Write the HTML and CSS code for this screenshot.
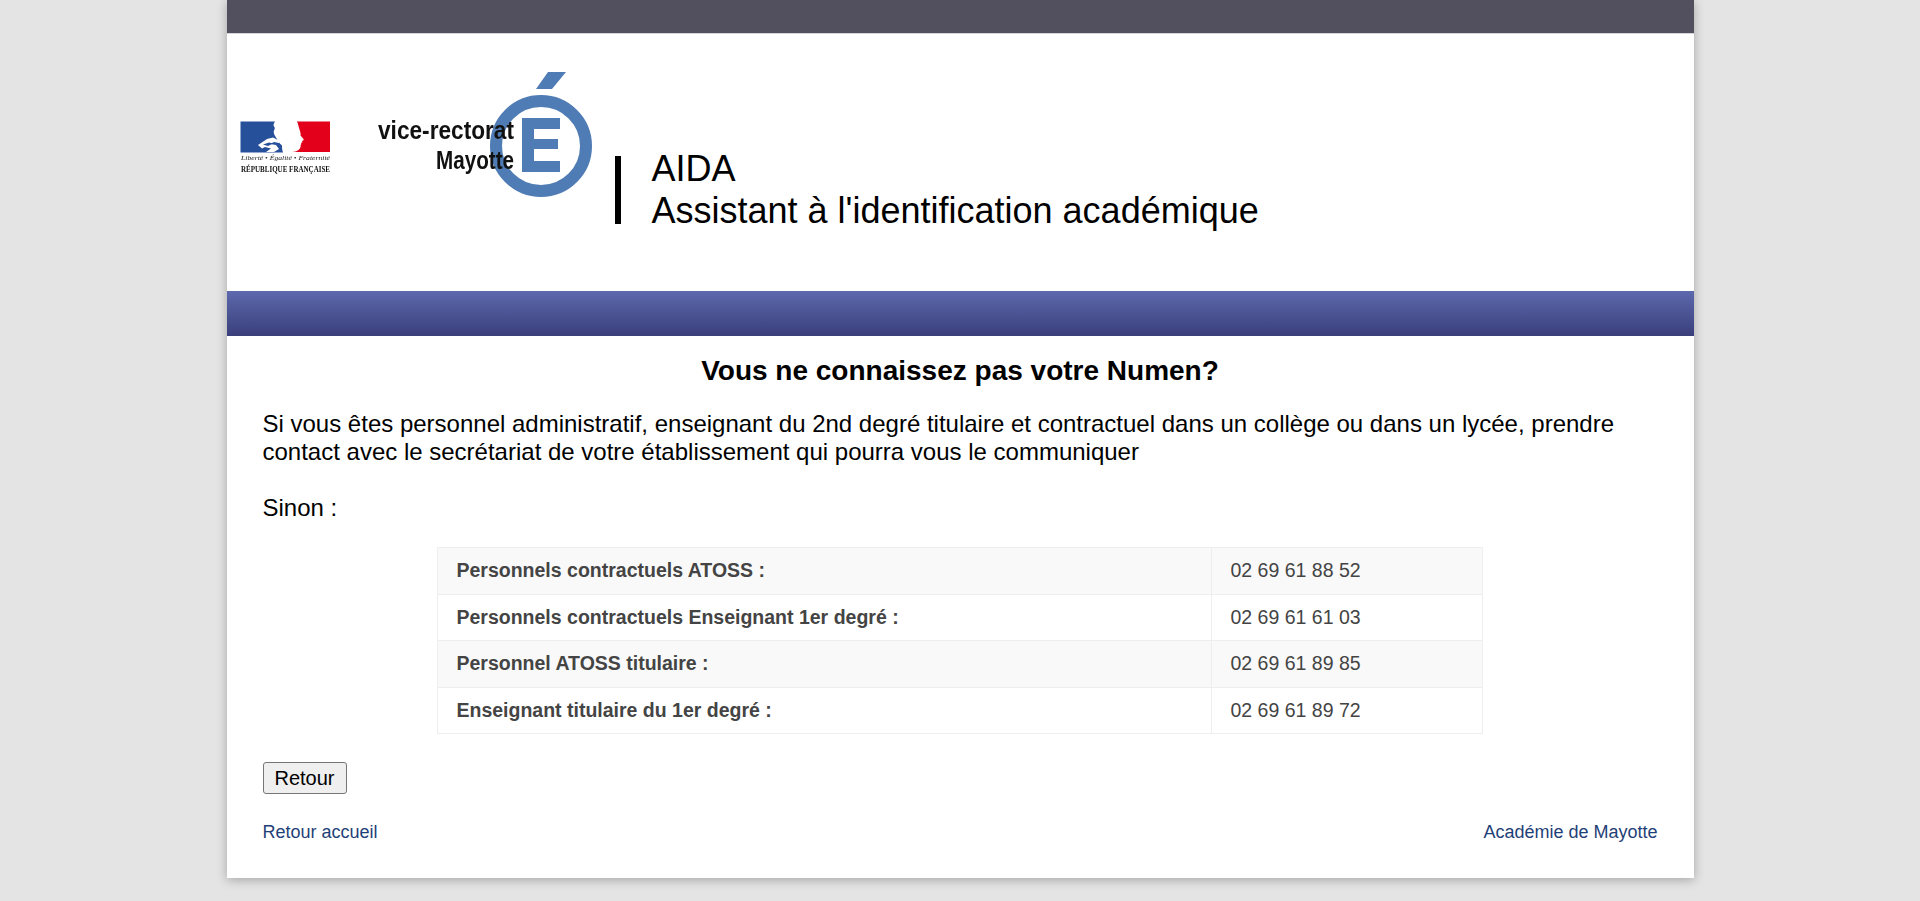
FILE: index.html
```html
<!DOCTYPE html>
<html lang="fr">
<head>
<meta charset="utf-8">
<title>AIDA</title>
<link rel="stylesheet" href="styles.css">
</head>
<body>
<div class="page">
  <div class="topbar"></div>
  <header class="header">
    <svg class="logo-rf" viewBox="236 116 100 60" width="100" height="60" aria-label="République française">
      <g class="soft">
        <path fill="#27509b" d="M240.500 121.500H275c-1 2-2 3-1 5 1 1 1 2 0 4-1 3 1 5 2 7 2 3 3 6 6 8 0 2 0 4 1 7h-42.500z"/>
        <path fill="#e2001a" d="M298 121.500H330v30.500h-38c3 0 6-1 7.500-3 1-1.500 1.500-3 1-4 1-.5 1-1.500 .5-2 1.500-.5 1.500-1 1-2 1.500-.5 2-1 1.500-2l-3-3.500c.5-2-.5-4-1-6-1-3-1.500-6-2.500-8.500z"/>
        <path fill="#fff" d="M258 145l9-6 6-1.500 7 3.500-1 2-5-1-4 2 6 1 3 4-5 3h-8l5-3.500-6-1.500-3 1.500z"/>
        <path fill="#27509b" d="M263 144.500l6-2 4 1-5 2.500z"/>
        <text class="rf-motto" x="241" y="160" textLength="89" lengthAdjust="spacingAndGlyphs">Liberté • Égalité • Fraternité</text>
        <text class="rf-name" x="241" y="172" textLength="89" lengthAdjust="spacingAndGlyphs">RÉPUBLIQUE FRANÇAISE</text>
      </g>
    </svg>
    <svg class="logo-vr" viewBox="374 66 222 136" width="222" height="136" aria-label="Vice-rectorat Mayotte">
      <g class="soft">
        <circle cx="541" cy="146" r="45" fill="none" stroke="#4f7cb4" stroke-width="12"/>
        <path fill="#4f7cb4" d="M548 72h18l-14 17h-16z"/>
        <path fill="#4f7cb4" d="M522 118h38v11h-26v10h24v10h-24v12h26v11h-38z"/>
        <text class="vr-text" x="378" y="139" textLength="136" lengthAdjust="spacingAndGlyphs">vice-rectorat</text>
        <text class="vr-text" x="436" y="169" textLength="78" lengthAdjust="spacingAndGlyphs">Mayotte</text>
      </g>
    </svg>
    <div class="sep"></div>
    <h1 class="app-title">AIDA<br>Assistant à l'identification académique</h1>
  </header>
  <div class="band"></div>
  <main class="content">
    <h2 class="heading">Vous ne connaissez pas votre Numen?</h2>
    <p class="intro">Si vous êtes personnel administratif, enseignant du 2nd degré titulaire et contractuel dans un collège ou dans un lycée, prendre contact avec le secrétariat de votre établissement qui pourra vous le communiquer</p>
    <p class="intro sinon">Sinon :</p>
    <table class="contacts">
      <tr><th>Personnels contractuels ATOSS :</th><td>02 69 61 88 52</td></tr>
      <tr><th>Personnels contractuels Enseignant 1er degré :</th><td>02 69 61 61 03</td></tr>
      <tr><th>Personnel ATOSS titulaire :</th><td>02 69 61 89 85</td></tr>
      <tr><th>Enseignant titulaire du 1er degré :</th><td>02 69 61 89 72</td></tr>
    </table>
    <button class="back" type="button">Retour</button>
    <div class="links">
      <a href="#">Retour accueil</a>
      <a href="#">Académie de Mayotte</a>
    </div>
  </main>
</div>
</body>
</html>
```
FILE: styles.css
```css
* { box-sizing: border-box; }
html, body { height: 100%; }
body {
  margin: 0;
  background: #e4e4e4;
  font-family: "Liberation Sans", Arial, sans-serif;
  color: #000;
  overflow: hidden;
}
.page {
  width: 1467px;
  margin: 0 auto;
  background: #fff;
  box-shadow: 0 2px 10px rgba(0, 0, 0, .28);
}
.topbar { height: 33px; background: #52505f; box-shadow: 0 1px 0 #d4d4d8; }
.header {
  height: 258px;
  display: flex;
  align-items: flex-start;
}
.logo-rf { margin: 83px 0 0 9px; flex: none; }
.logo-vr { margin: 33px 0 0 38px; flex: none; }
.soft { filter: blur(.45px); }
.rf-motto { font: italic 7px "Liberation Serif", serif; fill: #222; }
.rf-name { font: bold 7.500px "Liberation Serif", serif; fill: #111; }
.vr-text { font: bold 26.500px "Liberation Sans", sans-serif; fill: #111; }
.sep { width: 6px; height: 68px; margin: 123px 0 0 19px; background: #000; flex: none; }
.app-title {
  margin: 115px 0 0 31px;
  font-size: 36px;
  line-height: 42px;
  font-weight: 400;
}
.band { height: 45px; background: linear-gradient(#5c69ad, #3a3f7b); }
.content { padding: 19px 36px 35px 36px; }
.heading { margin: 0 0 23px; font-size: 28px; line-height: 32px; font-weight: 700; text-align: center; }
.intro { margin: 0; font-size: 24px; line-height: 28px; }
.sinon { margin-top: 28px; }
.contacts {
  width: 1046px;
  margin: 25px 0 28px 174px;
  border-collapse: collapse;
  font-size: 19.500px;
  color: #444;
}
.contacts th, .contacts td {
  height: 46.500px;
  padding: 0 19px;
  border: 1px solid #eee;
  text-align: left;
}
.contacts th { width: 774px; font-weight: 700; }
.contacts tr:nth-child(odd) { background: #f9f9f9; }
.back {
  display: block;
  height: 32px;
  width: 84px;
  padding: 0;
  font: 20px "Liberation Sans", sans-serif;
  color: #000;
  background: #efefef;
  border: 1px solid #767676;
  border-radius: 3px;
}
.links {
  display: flex;
  justify-content: space-between;
  margin-top: 27px;
  font-size: 18px;
  line-height: 22px;
}
.links a { color: #1f3f78; text-decoration: none; }
```
